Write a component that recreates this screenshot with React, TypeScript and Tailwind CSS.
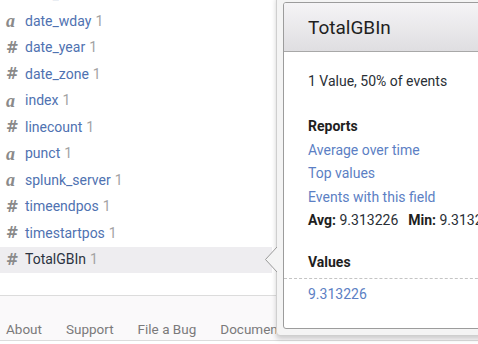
import React from 'react';

const fields: { name: string; type: 'a' | '#' }[] = [
  { name: 'date_second', type: '#' },
  { name: 'date_wday', type: 'a' },
  { name: 'date_year', type: '#' },
  { name: 'date_zone', type: '#' },
  { name: 'index', type: 'a' },
  { name: 'linecount', type: '#' },
  { name: 'punct', type: 'a' },
  { name: 'splunk_server', type: 'a' },
  { name: 'timeendpos', type: '#' },
  { name: 'timestartpos', type: '#' },
  { name: 'TotalGBIn', type: '#' },
];

function FieldRow({ name, type, active }: { name: string; type: 'a' | '#'; active?: boolean }) {
  return (
    <div
      className={`flex items-center h-[26.5px] w-[272px] pl-[6px] ${active ? 'bg-[#eeedf0]' : ''}`}
    >
      <span className="w-[19px] text-[#8a8a8a] leading-none">
        {type === 'a' ? (
          <span className="font-['Liberation_Serif',serif] italic font-bold text-[18px]">a</span>
        ) : (
          <span className="font-['DejaVu_Sans',sans-serif] font-bold text-[15px]">#</span>
        )}
      </span>
      <span className={`text-[14px] ${active ? 'text-[#2b3340]' : 'text-[#4f72b1]'}`}>{name}</span>
      <span className="text-[14px] text-[#a3a3a3] ml-[4px]">1</span>
    </div>
  );
}

export default function App() {
  return (
    <div className="relative w-[478px] h-[344px] overflow-hidden bg-white font-['Roboto',sans-serif]">
      <div className="h-[295px] overflow-hidden">
        <div className="-mt-[18.5px]">
          {fields.map((f) => (
            <FieldRow key={f.name} name={f.name} type={f.type} active={f.name === 'TotalGBIn'} />
          ))}
        </div>
      </div>

      <footer className="h-[46px] border-t border-b border-[#dcdcdc] bg-[#faf9fa]">
        <div className="w-[276px] overflow-hidden whitespace-nowrap flex gap-[24px] pl-[6px] pt-[23px] text-[13.5px] text-[#7a7a7a]">
          <span>About</span>
          <span>Support</span>
          <span>File a Bug</span>
          <span>Documentation</span>
        </div>
      </footer>

      {/* popover */}
      <div className="absolute z-10 left-[276px] top-[-5px] w-[230px] h-[341px] bg-[#f4f4f4] border border-[#cfcfcf] rounded-[4px] p-[6px] shadow-[0_3px_5px_rgba(0,0,0,0.18)]">
        <div className="h-full bg-white border border-[#9c9c9c] rounded-[3px] overflow-hidden">
          <div className="h-[49px] bg-gradient-to-b from-[#f5f4f6] to-[#dfdee1] border-b border-[#a8a8a8] flex items-center pl-[24px] pt-[2px]">
            <span className="text-[19px] text-[#1f1f1f]">TotalGBIn</span>
          </div>
          <div className="text-[14px] text-[#2a2f36]">
            <div className="pl-[24px] pt-[19px] leading-[20px]">1 Value, 50% of events</div>
            <div className="pl-[24px] mt-[24px] leading-[23.5px]">
              <div className="font-bold text-[#1e1e1e]">Reports</div>
              <div className="text-[#5c7fc4]">Average over time</div>
              <div className="text-[#5c7fc4]">Top values</div>
              <div className="text-[#5c7fc4]">Events with this field</div>
              <div className="whitespace-nowrap">
                <b className="text-[#1e1e1e]">Avg:</b> 9.313226
                <b className="text-[#1e1e1e] ml-[10px]">Min:</b> 9.313226
              </div>
            </div>
            <div className="pl-[24px] mt-[17px] pb-[4px] leading-[24px] font-bold text-[#1e1e1e] border-b border-dashed border-[#c4c4c4]">
              Values
            </div>
            <div className="pl-[24px] pt-[3px] leading-[24px] text-[#5c7fc4]">9.313226</div>
          </div>
        </div>
      </div>

      {/* arrow */}
      <svg className="absolute z-20 left-[264px] top-[247px]" width="14" height="26" viewBox="0 0 14 26">
        <path d="M13 0 L1.5 12.5 L13 25" fill="#f4f4f4" stroke="#9a9a9a" strokeWidth="1" />
        <rect x="13" y="0" width="1" height="26" fill="#f4f4f4" />
      </svg>
    </div>
  );
}
